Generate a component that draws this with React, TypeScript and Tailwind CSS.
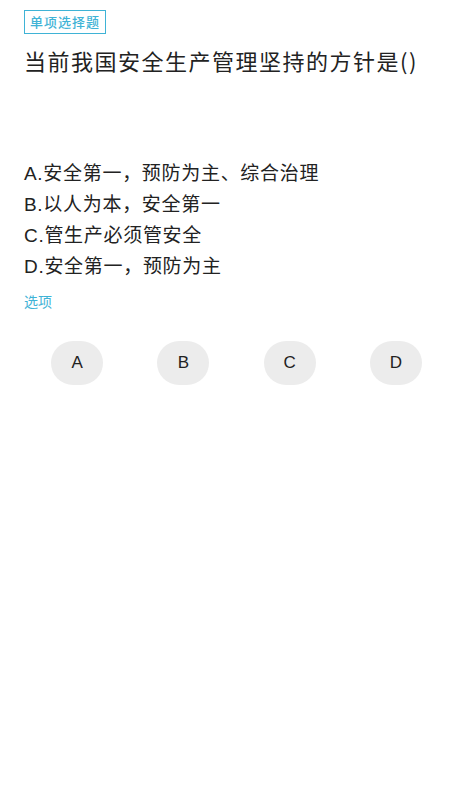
import React from "react";

const options = [
  "A.安全第一，预防为主、综合治理",
  "B.以人为本，安全第一",
  "C.管生产必须管安全",
  "D.安全第一，预防为主",
];

export default function App() {
  return (
    <div
      className="w-[473px] h-[793px] bg-white px-6 pt-[10px] flex flex-col"
      style={{ fontFamily: '"Noto Sans CJK SC", "Noto Sans", sans-serif' }}
    >
      <div className="self-start h-[24px] px-[5px] border-[1.5px] border-[#3fb3d6] text-[#3fb3d6] text-[13px] font-medium tracking-[1px] leading-[21px]">
        单项选择题
      </div>
      <div className="mt-[11px] text-[22px] leading-[30px] tracking-[1.5px] text-[#222]">
        当前我国安全生产管理坚持的方针是()
      </div>
      <div
        className="mt-[83px] flex flex-col"
        style={{ fontFamily: '"Liberation Sans", "Noto Sans CJK SC", sans-serif' }}
      >
        {options.map((o) => (
          <div key={o} className="text-[19px] leading-[31px] tracking-[0.7px] text-[#222]">
            {o}
          </div>
        ))}
      </div>
      <div className="mt-[9px] text-[14px] leading-[20px] text-[#3fb3d6]">选项</div>
      <div className="mt-[30px] grid grid-cols-4">
        {["A", "B", "C", "D"].map((l) => (
          <div key={l} className="flex justify-center">
            <div
              className="w-[52px] h-[44px] rounded-full bg-[#ececec] flex items-center justify-center text-[17px] text-[#222]"
              style={{ fontFamily: '"Liberation Sans", Arial, sans-serif' }}
            >
              {l}
            </div>
          </div>
        ))}
      </div>
    </div>
  );
}
